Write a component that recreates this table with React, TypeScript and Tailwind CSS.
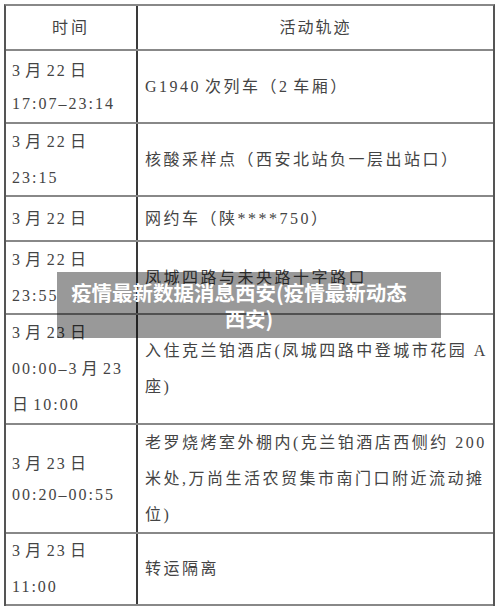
const hs = "\u200A";

const rows: { h: string; left: string[]; leftLead?: string; right: string[] }[] = [
  { h: "h-[73px]", left: [`3${hs}月${hs}22${hs}日`, "17:07–23:14"], leftLead: "leading-[33px]", right: [`G1940${hs}次列车（2${hs}车厢）`] },
  { h: "h-[73px]", left: [`3${hs}月${hs}22${hs}日`, "23:15"], right: ["核酸采样点（西安北站负一层出站口）"] },
  { h: "h-[45px]", left: [`3${hs}月${hs}22${hs}日`], right: ["网约车（陕****750）"] },
  { h: "h-[73px]", left: [`3${hs}月${hs}22${hs}日`, "23:55"], right: ["凤城四路与未央路十字路口"] },
  {
    h: "h-[110px]",
    left: [`3${hs}月${hs}23${hs}日`, `00:00–3${hs}月${hs}23`, `日${hs}10:00`],
    right: ["入住克兰铂酒店(凤城四路中登城市花园 A", "座)"],
  },
  {
    h: "h-[109px]",
    left: [`3${hs}月${hs}23${hs}日`, "00:20–00:55"],
    leftLead: "leading-[31px]",
    right: ["老罗烧烤室外棚内(克兰铂酒店西侧约 200", "米处,万尚生活农贸集市南门口附近流动摊", "位)"],
  },
  { h: "h-[72px]", left: [`3${hs}月${hs}23${hs}日`, "11:00"], right: ["转运隔离"] },
];

export default function App() {
  return (
    <div className="relative w-[500px] h-[612px] bg-white overflow-hidden font-['Liberation_Serif','Noto_Sans_CJK_SC',serif] text-[16px] text-[#444]">
      <div className="ml-[4px] mt-[4px] w-[491px] border-t-2 border-x-2 border-t-[#888] border-x-[#555]">
        <div className="flex h-[45px] border-b-2 border-[#888]">
          <div className="w-[132px] border-r-2 border-[#3a3a3a] flex items-center justify-center tracking-[3px]">
            时间
          </div>
          <div className="flex-1 flex items-center justify-center tracking-[2px]">活动轨迹</div>
        </div>
        {rows.map((r, i) => (
          <div key={i} className={`flex ${r.h} border-b-2 border-[#888]`}>
            <div
              className={`w-[132px] shrink-0 border-r-2 border-[#3a3a3a] pl-[6px] flex flex-col justify-center whitespace-nowrap tracking-[2px] ${
                r.leftLead ?? "leading-[36px]"
              }`}
            >
              {r.left.map((t, j) => (
                <div key={j}>{t}</div>
              ))}
            </div>
            <div className="flex-1 pl-[7px] flex flex-col justify-center whitespace-nowrap tracking-[2.5px] leading-[36px]">
              {r.right.map((t, j) => (
                <div key={j}>{t}</div>
              ))}
            </div>
          </div>
        ))}
      </div>

      {/* title banner over the picture */}
      <div className="absolute left-[57px] top-[272px] w-[384px] h-[66px] bg-black/40 flex flex-col items-center justify-center font-['Noto_Sans_CJK_SC',sans-serif] font-bold text-[20.5px] leading-[26px] text-white">
        <div className="pr-[20px]">疫情最新数据消息西安(疫情最新动态</div>
        <div>西安)</div>
      </div>
    </div>
  );
}
